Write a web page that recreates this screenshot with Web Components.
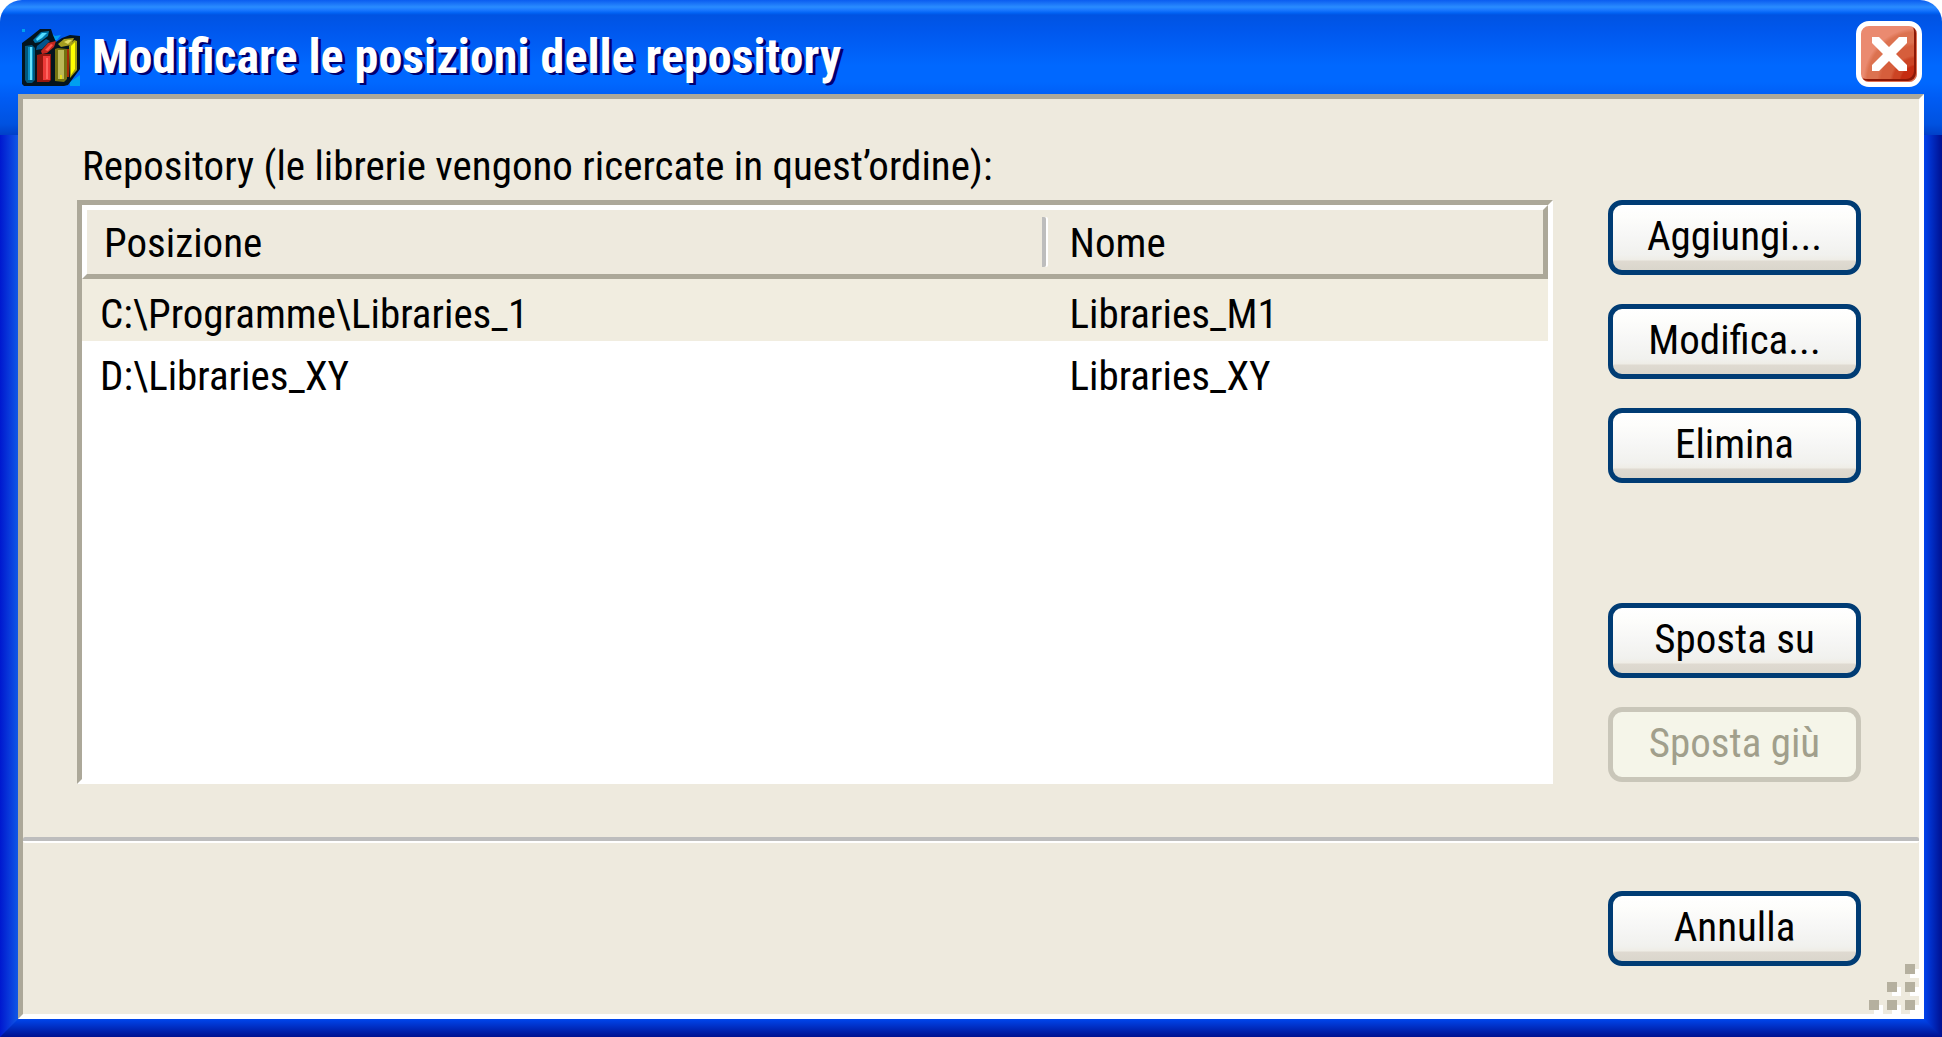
<!DOCTYPE html>
<html lang="it">
<head>
<meta charset="utf-8">
<title>Modificare le posizioni delle repository</title>
<style>
  html, body { margin: 0; background: #fff; }
  body { font: 41px/50px "Roboto Condensed", "Liberation Sans", sans-serif; color: #000; }
</style>
</head>
<body>
<dialog-window>
  <title-bar slot="title">Modificare le posizioni delle repository</title-bar>
  <repository-panel>
    <span slot="label">Repository (le librerie vengono ricercate in quest’ordine):</span>
    <repository-list slot="list"></repository-list>
    <button-group slot="actions">
      <push-button>Aggiungi...</push-button>
      <push-button>Modifica...</push-button>
      <push-button>Elimina</push-button>
    </button-group>
    <button-group slot="actions">
      <push-button>Sposta su</push-button>
      <push-button disabled>Sposta giù</push-button>
    </button-group>
  </repository-panel>
  <push-button slot="footer">Annulla</push-button>
</dialog-window>

<script>
const define = (name, html, setup) => {
  const template = document.createElement('template');
  template.innerHTML = '<style>*{box-sizing:border-box}</style>' + html;
  customElements.define(name, class extends HTMLElement {
    constructor() {
      super();
      this.attachShadow({ mode: 'open' }).append(template.content.cloneNode(true));
    }
    connectedCallback() { if (setup) setup(this, this.shadowRoot); }
  });
};

define('dialog-window', `
<style>
  :host { display: flex; flex-direction: column; box-sizing: border-box; min-height: 100vh; overflow: hidden;
    border-radius: 22px 22px 0 0;
    background:
      linear-gradient(#0a5cf0 0, #2a8cff 7px, #1a78ff 10px, #0062f4 13px, #0053e2 15px, #0058ee 32px, #0068ff 66px, #0068ff 82px, #005cf4 98px, #0052e0 124px, #0040c8 135px) 0 0 / 100% 135px no-repeat,
      linear-gradient(90deg, #0018cf, #1058e6) 0 0 / 18px 100% no-repeat,
      linear-gradient(90deg, #0042ec, #001090) 100% 0 / 18px 100% no-repeat; }
  main { flex: 1; display: flex; flex-direction: column; margin: 0 18px;
    border: 5px solid; border-color: #aca899 #fff #fff #aca899; background: #eeeade; }
  .content { flex: 1; display: flex; }
  .content ::slotted(*) { flex: 1; }
  hr { width: 100%; height: 6px; margin: 0; border: 0; border-top: 4px solid #bdbdbd; background: #fff; border-radius: 2px; }
  footer { position: relative; display: flex; justify-content: flex-end; padding: 48px 58px; }
  footer svg { position: absolute; right: 0; bottom: 0; }
  .edge { height: 18px; background: linear-gradient(#0046ec, #001090);
    clip-path: polygon(0 100%, 18px 0, calc(100% - 18px) 0, 100% 100%); }
</style>
<slot name="title"></slot>
<main>
  <div class="content"><slot></slot></div>
  <hr>
  <footer>
    <slot name="footer"></slot>
    <svg width="50" height="50" aria-hidden="true">
      <g fill="#fff"><path d="M41 5h9v9h-9zM23 23h9v9h-9zM41 23h9v9h-9zM5 41h9v9H5zM23 41h9v9h-9zM41 41h9v9h-9z"/></g>
      <g fill="#b5b09f"><path d="M36 0h10v10H36zM18 18h10v10H18zM36 18h10v10H36zM0 36h10v10H0zM18 36h10v10H18zM36 36h10v10H36z"/></g>
    </svg>
  </footer>
</main>
<div class="edge"></div>`);

define('title-bar', `
<style>
  :host { display: block; }
  header { display: flex; align-items: center; height: 94px; padding: 14px 20px 0 22px; }
  .brand { flex: 1; display: flex; align-items: center; gap: 12px; padding-top: 6px; }
  h1 { margin: 0; font: inherit; font-weight: bold; font-size: 48px; line-height: 56px; color: #fff; text-shadow: 3px 2px 0 #000070; }
  svg { display: block; }
  button { width: 66px; height: 66px; padding: 0; border: 5px solid #fff; border-radius: 13px;
    background: radial-gradient(circle at 100% 100%, #c62c10 0 16px, #cc4424 18px 24px, #d65e3c 27px 36px, #dc7250 40px 50px, #ea8a70 54px);
    box-shadow: inset -1px -1px 0 #e07050, inset -3px -3px 0 #8c1806; }
</style>
<header>
  <div class="brand">
  <svg class="books" width="58" height="58" viewBox="0 0 58 58" aria-hidden="true">
    <path fill="#00a0f0" d="M0 1h3v3H0zM29 5l4 3 6-1-4 5h-6zM48 54l10-7v11H48z"/>
    <path fill="#04141e" d="M0 15 8 9l10-8h11l2 6 3 7 6-4 8-3 10 1v33L46 57l-4 1H2l-2-2z"/>
    <path fill="#00587e" d="M3 18l7-1 3 3v32l-3 3H5l-2-3z"/><path fill="#0b8fc4" d="M6 19h5v33H6z"/><path fill="#68e4ff" d="M8 19h2v33H8z"/>
    <path fill="#0075aa" d="M11 12 19 4l8-1-1 5-8 6-5 1z"/><path fill="#52dcff" d="m14 11 6-6h5l-5 5-5 3z"/>
    <path fill="#00558e" d="m15 18 9-7 4 2-8 8-6 1z"/>
    <path fill="#941810" d="m15 27 4-1h10v26l-2 2H15z"/><path fill="#ee3a38" d="M21 28h7v24h-7z"/><path fill="#ff6560" d="M24 30h2v21h-2z"/>
    <path fill="#c22820" d="m19 23 7-8 8-2-2 6-7 6-5 1z"/><path fill="#ff5850" d="m23 22 6-6 2 1-5 6z"/>
    <path fill="#747210" d="m33 21 3-1 9 1v30l-3 3-9-1z"/><path fill="#bcb958" d="M36 22h6v29h-6z"/><path fill="#e8df18" d="M38 47h2v4h-2z"/>
    <path fill="#a59d20" d="m36 16 6-5 10-1-3 7-10 2z"/><path fill="#e4dc65" d="m42 14 4-2h4l-4 4z"/>
    <path fill="#a52b05" d="M45 21h2v28h-2z"/>
    <path fill="#a6a410" d="m47 18 5-6 3 1v29l-7 8z"/><path fill="#ffff00" d="m49 18 4-4v27l-4 6z"/>
  </svg>
  <h1><slot></slot></h1>
  </div>
  <button type="button" aria-label="Chiudi">
    <svg width="56" height="56" viewBox="0 0 56 56" aria-hidden="true"><path fill="#fff" d="M11 11h7l10 10 10-10h8v6L35 28l11 11v6h-8L28 35 18 45h-7v-6l11-11-11-11z"/></svg>
  </button>
</header>`);

define('repository-panel', `
<style>
  :host { display: flex; flex-direction: column; padding: 42px 58px 53px 54px; box-sizing: border-box; }
  .label { padding: 0 5px; margin-bottom: 9px; }
  .row { flex: 1; display: flex; gap: 55px; }
  .list { flex: 1; display: flex; }
  .list ::slotted(*) { flex: 1; }
  .actions { display: flex; flex-direction: column; justify-content: space-between; padding-bottom: 2px; }
</style>
<div class="label"><slot name="label"></slot></div>
<div class="row">
  <div class="list"><slot name="list"></slot></div>
  <div class="actions"><slot name="actions"></slot></div>
</div>`);

define('repository-list', `
<style>
  :host { display: block; box-sizing: border-box; border: 5px solid; border-color: #aca899 #fff #fff #aca899; background: #fff; }
  table { width: 100%; border-spacing: 0; table-layout: fixed; }
  .place { width: 66%; }
  th { height: 74px; padding: 0; text-align: left; font-weight: normal; background: #eeeade; border: 0 solid; border-color: #fff #aca899 #aca899 #fff; border-width: 5px 0; }
  th:first-child { border-left-width: 5px; }
  th:last-child { border-right-width: 5px; padding: 2px 0 0 20px; }
  th div { padding: 2px 0 0 17px; line-height: 48px; border-right: 4px solid #bdbdbd; border-radius: 2px; box-shadow: 2px 0 #fff; margin-right: 4px; }
  td { height: 62px; padding: 8px 0 0 18px; }
  td + td { padding-left: 20px; }
  tbody tr:first-child { background: #f1ede0; }
</style>
<table>
  <colgroup><col class="place"><col></colgroup>
  <thead><tr><th scope="col"><div>Posizione</div></th><th scope="col">Nome</th></tr></thead>
  <tbody>
    <tr><td>C:\\Programme\\Libraries_1</td><td>Libraries_M1</td></tr>
    <tr><td>D:\\Libraries_XY</td><td>Libraries_XY</td></tr>
  </tbody>
</table>`);

define('button-group', `
<style>:host { display: flex; flex-direction: column; gap: 29px; }</style><slot></slot>`);

define('push-button', `
<style>
  :host { display: block; }
  button { display: block; width: 253px; height: 75px; padding: 0 0 4px; font: inherit; color: #000; text-align: center;
    border: 5px solid #003c74; border-radius: 14px;
    background: linear-gradient(#fff 0, #fdfdfb 12px, #f7f7f6 30px, #f1f1ee 50px, #efede6 55px, #dfdad1 56px, #dad6cc 65px) padding-box; }
  button:disabled { color: #a19f8c; border-color: #c9c6b9; background: #f5f5e9; }
</style>
<button type="button"><slot></slot></button>`,
(host, root) => { root.querySelector('button').disabled = host.hasAttribute('disabled'); });
</script>
</body>
</html>
